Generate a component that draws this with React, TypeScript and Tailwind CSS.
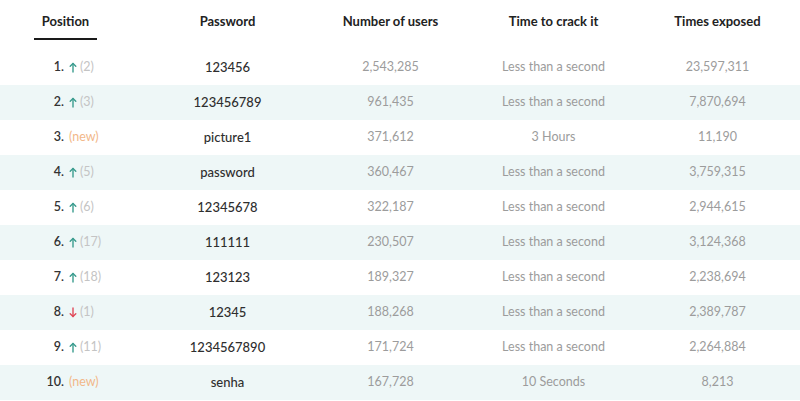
import React from 'react';

type Change = { dir: 'up' | 'down' | 'new'; prev?: number };

const rows: { pos: number; change: Change; pw: string; users: string; time: string; exposed: string }[] = [
  { pos: 1, change: { dir: 'up', prev: 2 }, pw: '123456', users: '2,543,285', time: 'Less than a second', exposed: '23,597,311' },
  { pos: 2, change: { dir: 'up', prev: 3 }, pw: '123456789', users: '961,435', time: 'Less than a second', exposed: '7,870,694' },
  { pos: 3, change: { dir: 'new' }, pw: 'picture1', users: '371,612', time: '3 Hours', exposed: '11,190' },
  { pos: 4, change: { dir: 'up', prev: 5 }, pw: 'password', users: '360,467', time: 'Less than a second', exposed: '3,759,315' },
  { pos: 5, change: { dir: 'up', prev: 6 }, pw: '12345678', users: '322,187', time: 'Less than a second', exposed: '2,944,615' },
  { pos: 6, change: { dir: 'up', prev: 17 }, pw: '111111', users: '230,507', time: 'Less than a second', exposed: '3,124,368' },
  { pos: 7, change: { dir: 'up', prev: 18 }, pw: '123123', users: '189,327', time: 'Less than a second', exposed: '2,238,694' },
  { pos: 8, change: { dir: 'down', prev: 1 }, pw: '12345', users: '188,268', time: 'Less than a second', exposed: '2,389,787' },
  { pos: 9, change: { dir: 'up', prev: 11 }, pw: '1234567890', users: '171,724', time: 'Less than a second', exposed: '2,264,884' },
  { pos: 10, change: { dir: 'new' }, pw: 'senha', users: '167,728', time: '10 Seconds', exposed: '8,213' },
];

const Arrow = ({ down }: { down?: boolean }) => (
  <svg width="8" height="11" viewBox="0 0 8 11" fill="none" stroke="currentColor" strokeWidth="1.4" strokeLinecap="round" strokeLinejoin="round" className={down ? 'rotate-180' : ''}>
    <path d="M4 10V1.5" />
    <path d="M1.2 4.3L4 1.5L6.8 4.3" />
  </svg>
);

const ChangeTag = ({ change }: { change: Change }) => {
  if (change.dir === 'new') return <span className="text-[#f2b889]">(new)</span>;
  return (
    <span className="flex items-center gap-[3px]">
      <span className={change.dir === 'up' ? 'text-[#3a9c8e]' : 'text-[#e04a5a]'}>
        <Arrow down={change.dir === 'down'} />
      </span>
      <span className="text-[#c4c4c4]">({change.prev})</span>
    </span>
  );
};

const grid = 'grid grid-cols-[146px_163px_163px_163px_1fr]';

export default function App() {
  return (
    <div className="w-[800px] h-[401px] bg-white font-['Lato',sans-serif] text-[12.5px] overflow-hidden">
      <div className={`${grid} h-[50px] font-bold text-[13px] text-[#222]`}>
        <div className="pl-[34px]">
          <div className="w-[63px] h-[40px] pt-[5px] border-b-2 border-[#1a1a1a] flex items-center justify-center">Position</div>
        </div>
        <div className="flex items-center justify-center pb-[7px]">Password</div>
        <div className="flex items-center justify-center pb-[7px]">Number of users</div>
        <div className="flex items-center justify-center pb-[7px]">Time to crack it</div>
        <div className="flex items-center justify-center pb-[7px]">Times exposed</div>
      </div>
      {rows.map((r, i) => (
        <div key={r.pos} className={`${grid} h-[35px] items-center ${i % 2 === 1 ? 'bg-[#eef7f7]' : ''}`}>
          <div className="flex items-center">
            <span className="w-[64px] text-right font-semibold text-[#333]">{r.pos}.</span>
            <span className="ml-[5px]">
              <ChangeTag change={r.change} />
            </span>
          </div>
          <div className="text-center font-medium text-[13px] text-[#2e2e2e]">{r.pw}</div>
          <div className="text-center text-[#9c9c9c]">{r.users}</div>
          <div className="text-center text-[#9c9c9c]">{r.time}</div>
          <div className="text-center text-[#9c9c9c]">{r.exposed}</div>
        </div>
      ))}
    </div>
  );
}
